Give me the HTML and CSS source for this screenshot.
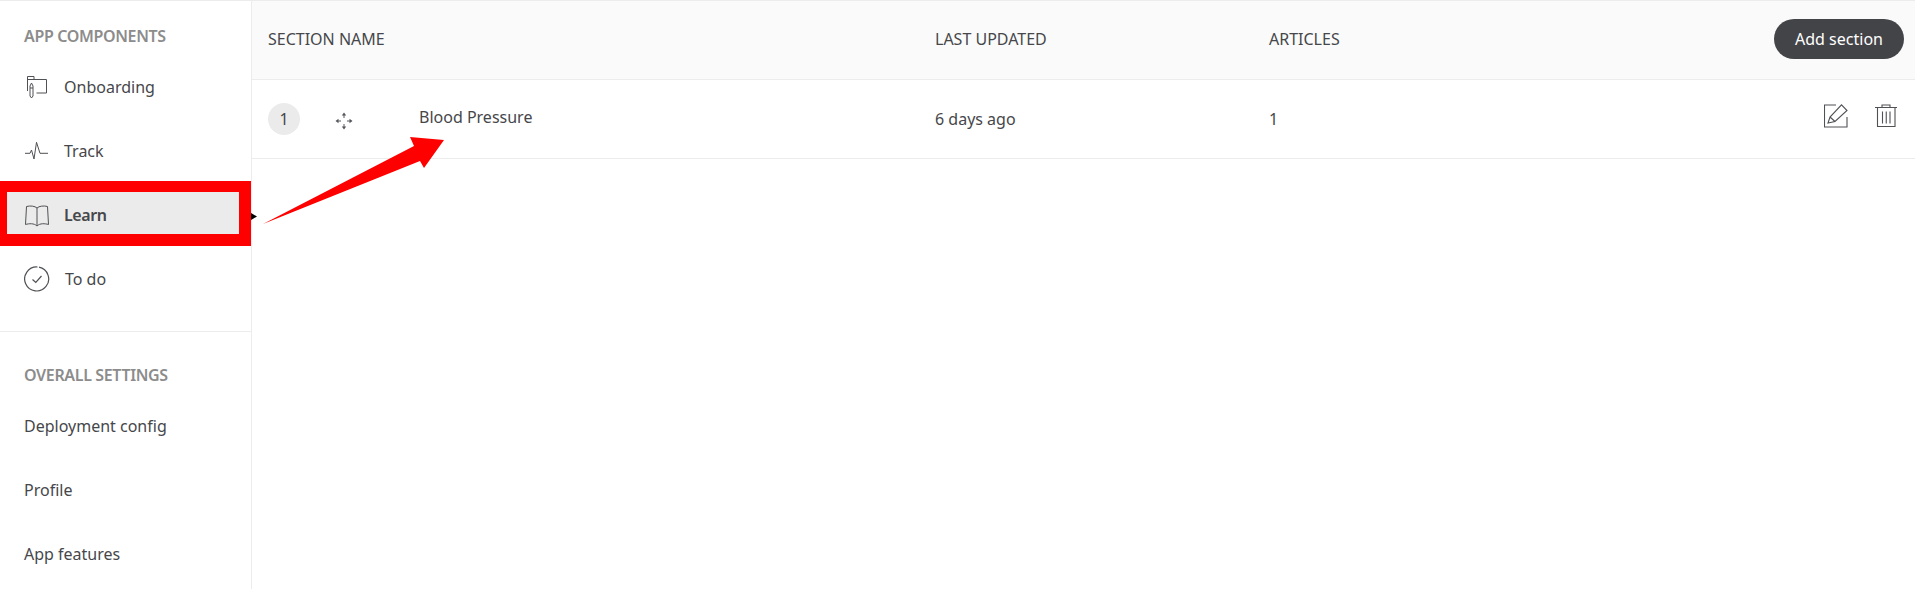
FILE: index.html
```html
<!DOCTYPE html>
<html lang="en">
<head>
<meta charset="utf-8">
<title>Learn sections</title>
<link rel="stylesheet" href="styles.css">
</head>
<body>
<div class="app">
  <aside class="sidebar">
    <section class="group group-components">
      <h2 class="group-title">App components</h2>
      <a class="nav-item">
        <svg class="nav-icon" viewBox="0 0 24 24" fill="none"><path d="M2.500 16V1.500H9V4.500H21.500V18H11.500M2.500 4.500H9"/><path d="M5 11 6.500 8 8 11V21L6.500 23 5 21ZM5 13H8"/></svg>
        <span>Onboarding</span>
      </a>
      <a class="nav-item">
        <svg class="nav-icon" viewBox="0 0 24 24" fill="none"><path d="M0 14.300H5L6.500 11 9 20 11.500 3.300 15 14.300H23"/></svg>
        <span>Track</span>
      </a>
      <a class="nav-item active">
        <svg class="nav-icon" viewBox="0 0 24 24" fill="none"><path d="M12 5C10 3 5 2.500 1.500 3.500L.5 21.500C4 20.500 9 20 12 23 15 20 20 20.500 23.500 21.500L22.500 3.500C19 2.500 14 3 12 5ZM12 5V22"/></svg>
        <span>Learn</span>
      </a>
      <a class="nav-item">
        <svg class="nav-icon wide" viewBox="0 0 26 26" fill="none"><path d="M15 1.200A12 12 0 1 1 13.500 1"/><path d="M8.500 13.500 11.800 16.500 17.500 10"/></svg>
        <span>To do</span>
      </a>
    </section>
    <section class="group group-settings">
      <h2 class="group-title">Overall settings</h2>
      <a class="nav-item plain"><span>Deployment config</span></a>
      <a class="nav-item plain"><span>Profile</span></a>
      <a class="nav-item plain"><span>App features</span></a>
    </section>
  </aside>
  <main class="content">
    <div class="table-row table-head">
      <div>Section name</div>
      <div>Last updated</div>
      <div>Articles</div>
      <button class="add-button" type="button">Add section</button>
    </div>
    <div class="table-row table-body">
      <div class="name-cell">
        <span class="order">1</span>
        <svg class="move-icon" viewBox="0 0 18 18" fill="none"><path d="M9 3V6M9 12V15M3 9H6M12 9H15"/><path class="solid" d="M9 .5 11.200 3.500H6.800ZM9 17.500 6.800 14.500H11.200ZM.5 9 3.500 6.800V11.200ZM17.500 9 14.500 11.200V6.800Z"/></svg>
        <span class="section-name">Blood Pressure</span>
      </div>
      <div>6 days ago</div>
      <div>1</div>
      <div class="actions">
        <svg class="action-icon" viewBox="0 0 24 24" fill="none"><path d="M12 1H.5V23H23V13"/><path d="M4 19 6 13 17.500 .8 23 6.500 11 17.500ZM6 13 11 17.500"/></svg>
        <svg class="action-icon" viewBox="0 0 24 24" fill="none"><path d="M1 3.500H23M8 3.500V1H16V3.500M3.500 3.500V22.500H21V3.500M8.500 7.500V19.500M12.250 7.500V19.500M16 7.500V19.500"/></svg>
      </div>
    </div>
  </main>
</div>
<div class="callout"></div>
<svg class="callout-arrow" viewBox="0 0 1915 589" width="1915" height="589">
  <path class="pointer" d="M251 213 257 216.500 251 220Z"/>
  <path class="arrow" d="M263 224 414 146 410 137 444 140 424 168 420 161Z"/>
</svg>
</body>
</html>
```
FILE: styles.css
```css
* { box-sizing: border-box; }

html, body {
  margin: 0;
  height: 589px;
  overflow: hidden;
  background: #fff;
}

body {
  position: relative;
  font-family: "Noto Sans", sans-serif;
  font-size: 16px;
  color: #46474a;
}

.app {
  display: flex;
  height: 589px;
  border-top: 1px solid #ececec;
}

.sidebar {
  flex: 0 0 252px;
  border-right: 1px solid #ececec;
}

.group-components {
  padding-top: 22px;
  height: 331px;
  border-bottom: 1px solid #ececec;
}

.group-settings {
  padding-top: 30px;
}

.group-title {
  margin: 0;
  padding-left: 24px;
  height: 26px;
  font-size: 16px;
  line-height: 26px;
  font-weight: 600;
  letter-spacing: -.35px;
  text-transform: uppercase;
  color: #8c8c8c;
}

.group-components .group-title { margin-bottom: 6px; }
.group-settings .group-title { margin-bottom: 6px; }

.nav-item {
  display: flex;
  align-items: center;
  height: 64px;
  padding-left: 25px;
  gap: 15px;
}

.nav-item.plain {
  padding-left: 24px;
}

.nav-item.active {
  background: #ebebeb;
  background-clip: padding-box;
  border-block: 4px solid transparent;
  font-weight: 600;
  letter-spacing: -.4px;
}

.nav-icon {
  width: 24px;
  height: 24px;
  flex: none;
  stroke: #505155;
  stroke-width: 1;
}

.nav-icon.wide {
  width: 26px;
  height: 26px;
  margin-left: -1px;
  stroke-width: 1.200;
}

.content {
  flex: 1;
  min-width: 0;
}

.table-row {
  display: grid;
  grid-template-columns: 667px 334px 1fr auto;
  align-items: center;
  padding: 0 11px 0 16px;
  border-bottom: 1px solid #ececec;
}

.table-head {
  height: 79px;
  padding-bottom: 2px;
  background: #fafafa;
  text-transform: uppercase;
}

.table-body {
  height: 79px;
}

.add-button {
  width: 130px;
  height: 40px;
  padding: 0;
  border: 0;
  border-radius: 20px;
  background: #434448;
  color: #fff;
  font: inherit;
  text-transform: none;
}

.name-cell {
  display: flex;
  align-items: center;
}

.order {
  display: flex;
  align-items: center;
  justify-content: center;
  width: 32px;
  height: 32px;
  border-radius: 50%;
  background: #ebebeb;
}

.move-icon {
  width: 18px;
  height: 18px;
  margin-left: 35px;
  margin-top: 3px;
  stroke: #55565a;
  stroke-width: 1;
}

.solid {
  fill: #55565a;
  stroke: none;
}

.section-name {
  margin-left: 66px;
  margin-top: -4px;
}

.actions {
  display: flex;
  gap: 26px;
  padding-right: 6px;
  margin-top: -7px;
}

.action-icon {
  width: 24px;
  height: 24px;
  stroke: #505155;
  stroke-width: 1.100;
}

.callout {
  position: absolute;
  left: 0;
  top: 181px;
  width: 251px;
  height: 65px;
  border-style: solid;
  border-color: #ff0000;
  border-width: 11px 12px 12px 7px;
}

.callout-arrow {
  position: absolute;
  left: 0;
  top: 0;
  pointer-events: none;
}

.arrow { fill: #ff0000; }
.pointer { fill: #000; }
```
